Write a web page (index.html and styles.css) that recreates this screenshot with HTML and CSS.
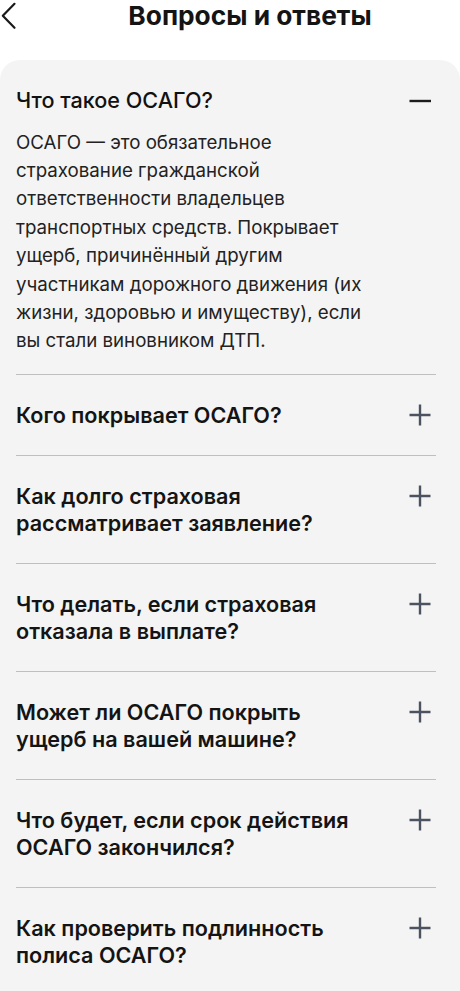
FILE: index.html
```html
<!DOCTYPE html>
<html lang="ru">
<head>
<meta charset="utf-8">
<link rel="stylesheet" href="styles.css">
</head>
<body>
<header class="topbar">
  <button class="back" aria-label="Назад">
    <svg width="18" height="28" viewBox="0 0 18 28"><path d="M14.5 1.8 L2.8 13.8 L14.5 25.8" fill="none" stroke="#1a1a1a" stroke-width="2.2" stroke-linecap="round" stroke-linejoin="round"/></svg>
  </button>
  <h1 class="title">Вопросы и ответы</h1>
</header>
<main class="card">
  <section class="item open">
    <div class="q">
      <span class="q-text">Что такое ОСАГО?</span>
      <svg class="icon" width="24" height="24" viewBox="0 0 24 24"><path d="M1.5 12 H23" stroke="#1c1c1c" stroke-width="2.4"/></svg>
    </div>
    <p class="answer">ОСАГО — это обязательное страхование гражданской ответственности владельцев транспортных средств. Покрывает ущерб, причинённый другим участникам дорожного движения (их жизни, здоровью и имуществу), если вы стали виновником ДТП.</p>
  </section>
  <section class="item">
    <div class="q">
      <span class="q-text">Кого покрывает ОСАГО?</span>
      <svg class="icon" width="24" height="24" viewBox="0 0 24 24"><path d="M1.5 12 H22.5 M12 1.5 V22.5" stroke="#4b5360" stroke-width="2.4"/></svg>
    </div>
  </section>
  <section class="item">
    <div class="q">
      <span class="q-text">Как долго страховая рассматривает заявление?</span>
      <svg class="icon" width="24" height="24" viewBox="0 0 24 24"><path d="M1.5 12 H22.5 M12 1.5 V22.5" stroke="#4b5360" stroke-width="2.4"/></svg>
    </div>
  </section>
  <section class="item">
    <div class="q">
      <span class="q-text">Что делать, если страховая отказала в выплате?</span>
      <svg class="icon" width="24" height="24" viewBox="0 0 24 24"><path d="M1.5 12 H22.5 M12 1.5 V22.5" stroke="#4b5360" stroke-width="2.4"/></svg>
    </div>
  </section>
  <section class="item">
    <div class="q">
      <span class="q-text">Может ли ОСАГО покрыть ущерб на вашей машине?</span>
      <svg class="icon" width="24" height="24" viewBox="0 0 24 24"><path d="M1.5 12 H22.5 M12 1.5 V22.5" stroke="#4b5360" stroke-width="2.4"/></svg>
    </div>
  </section>
  <section class="item">
    <div class="q">
      <span class="q-text">Что будет, если срок действия ОСАГО закончился?</span>
      <svg class="icon" width="24" height="24" viewBox="0 0 24 24"><path d="M1.5 12 H22.5 M12 1.5 V22.5" stroke="#4b5360" stroke-width="2.4"/></svg>
    </div>
  </section>
  <section class="item">
    <div class="q">
      <span class="q-text">Как проверить подлинность полиса ОСАГО?</span>
      <svg class="icon" width="24" height="24" viewBox="0 0 24 24"><path d="M1.5 12 H22.5 M12 1.5 V22.5" stroke="#4b5360" stroke-width="2.4"/></svg>
    </div>
  </section>
</main>
</body>
</html>
```

FILE: styles.css
```css
* { box-sizing: border-box; }
html, body { margin: 0; padding: 0; background: #ffffff; }
body {
  font-family: Inter, "Noto Sans", sans-serif;
  color: #141414;
  width: 460px;
  overflow: hidden;
}
.topbar {
  display: flex;
  align-items: center;
  height: 32px;
  margin-bottom: 28px;
}
.back {
  width: 40px;
  height: 32px;
  padding: 0;
  border: 0;
  background: none;
  display: flex;
  align-items: center;
  justify-content: flex-start;
  flex: none;
}
.title {
  flex: 1;
  margin: 0;
  text-align: center;
  font-size: 26.3px;
  line-height: 32px;
  font-weight: 700;
  color: #141414;
}
.card {
  background: #f4f4f4;
  border-radius: 20px 20px 0 0;
  padding: 0 24px 0 16px;
  min-height: 940px;
}
.item {
  padding: 27px 0 26px;
  border-top: 1px solid #bfbfbf;
}
.item:first-child { border-top: 0; }
.q {
  display: flex;
  align-items: flex-start;
  justify-content: space-between;
  gap: 20px;
  padding-right: 4px;
}
.q-text {
  flex: 1;
  font-size: 21.6px;
  line-height: 27px;
  font-weight: 600;
  color: #141414;
  max-width: 340px;
}
.open .q-text {
  font-weight: 500;
  color: #111111;
}
.icon {
  flex: none;
  margin-top: 1.5px;
}
.answer {
  margin: 14.5px 0 0;
  font-size: 18.7px;
  line-height: 28.4px;
  color: #222222;
  max-width: 352px;
}
.open { padding-bottom: 18px; }
```
